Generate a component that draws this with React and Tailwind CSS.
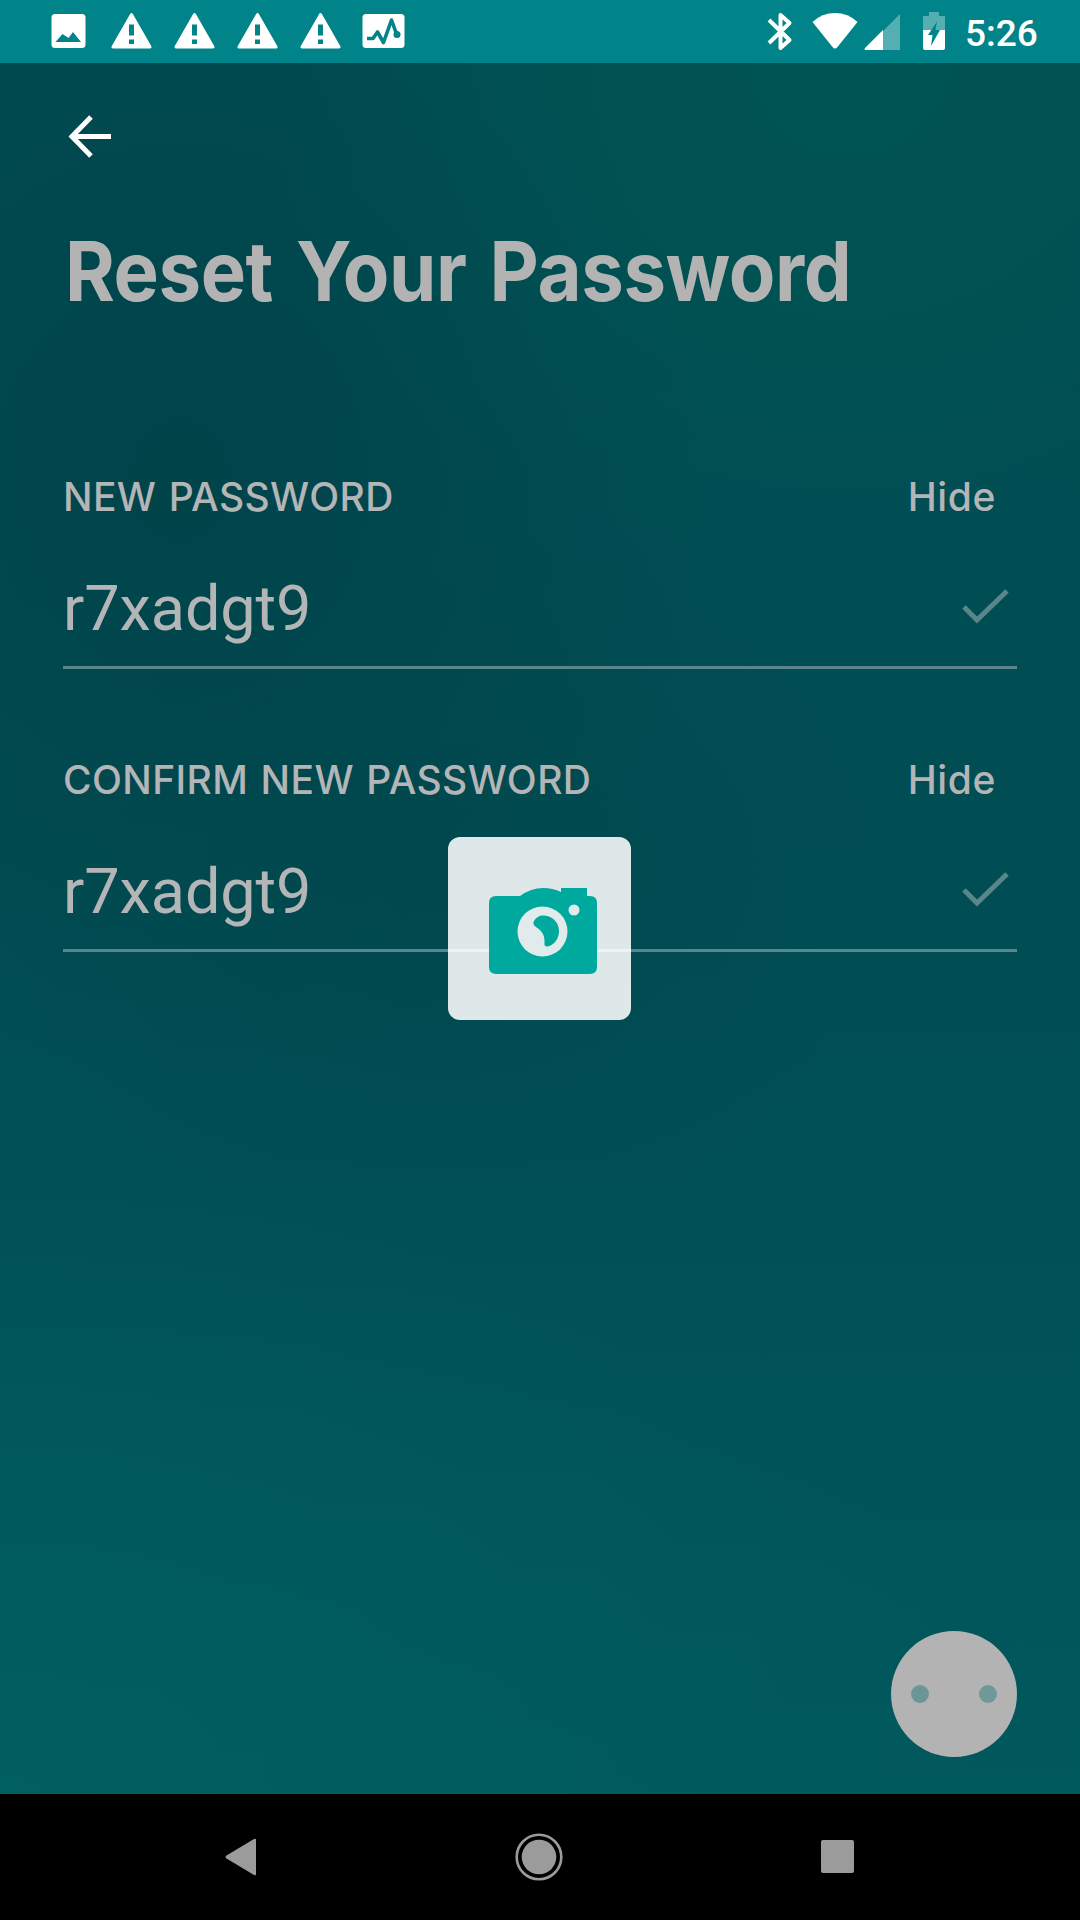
const sans = "font-['Inter','Liberation_Sans',sans-serif]";

function Warning() {
  return (
    <svg className="h-[36px] w-[41px]" viewBox="0 0 41 36" fill="#fff" fillRule="evenodd">
      <path d="M20.500 0Q21.300 0 22 1.200L40.500 33.500Q41 35.500 39 35.500H2Q0 35.500.5 33.500L19 1.200Q19.700 0 20.500 0ZM18 11.500V22.500H23V11.500ZM18 26.500V31H23V26.500Z" />
    </svg>
  );
}

function StatusBar() {
  return (
    <header className="flex h-[63px] shrink-0 items-start bg-[#008489] text-white">
      <div className="flex pt-[13px] pl-[51px]">
        <svg className="h-[36px] w-[35px]" viewBox="0 0 35 36" fill="#fff" fillRule="evenodd">
          <path d="M4 1H31Q34.500 1 34.500 4.500V31.500Q34.500 35 31 35H4Q.5 35 .5 31.500V4.500Q.5 1 4 1ZM4.500 29H30L22 19L17.500 25L11.500 21Z" />
        </svg>
        <div className="flex gap-[22px] pl-[25px]">
          <Warning /><Warning /><Warning /><Warning />
        </div>
        <svg className="ml-[21px] h-[36px] w-[43px]" viewBox="0 0 43 36">
          <rect x=".5" y="1" width="42" height="34" rx="3.500" fill="#fff" />
          <path d="M5 25.500H11L15.500 19L21.500 29.500L29.500 7L34.500 21" fill="none" stroke="#008489" strokeWidth="3.600" strokeLinejoin="round" />
          <circle cx="35" cy="21.500" r="3.500" fill="#008489" />
        </svg>
      </div>
      <div className="ml-auto flex pt-[12px] pr-[44px]">
        <svg className="h-[39px] w-[26px]" viewBox="0 0 26 39">
          <path d="M2 8L22.500 28L13.500 36V3L22.500 11L2 31" fill="none" stroke="#fff" strokeWidth="4" strokeLinejoin="round" />
        </svg>
        <svg className="ml-[19px] h-[39px] w-[46px]" viewBox="0 0 46 39" fill="#fff">
          <path d="M.5 10Q10 1 23 1T45.500 10L25.500 35Q23 38 20.500 35Z" />
        </svg>
        <svg className="ml-[6px] h-[39px] w-[37px]" viewBox="0 0 37 39">
          <path d="M19 19L36 2V38H19Z" fill="#55afb2" />
          <path d="M19 18V38H2Q-.5 38 1 36Z" fill="#fff" />
        </svg>
        <svg className="ml-[21px] h-[39px] w-[24px]" viewBox="0 0 24 39">
          <path d="M7 0H17V4H23V18H1V4H7Z" fill="#55afb2" />
          <path d="M1 18H23V36Q23 38 21 38H3Q1 38 1 36Z" fill="#fff" />
          <path d="M15 9.500L13.500 18H18L9 34L10.500 23H6Z" fill="#008489" />
        </svg>
        <span className="-mt-[1px] ml-[19px] w-[71px] font-['Roboto',sans-serif] text-[37px] leading-[46px] font-medium whitespace-nowrap">5:26</span>
      </div>
    </header>
  );
}

function PasswordField({ label }) {
  return (
    <section className="h-[283px] px-[63px] text-[#b4b5b6]">
      <div className={`flex h-[48px] items-center justify-between pr-[21px] text-[39px] leading-[48px] font-[450] ${sans}`}>
        <span className="tracking-[0.400px] whitespace-nowrap [word-spacing:1.500px]">{label}</span>
        <span className="tracking-[0.600px]">Hide</span>
      </div>
      <div className="mt-[41px] flex h-[107px] items-start justify-between border-b-[3px] border-[#5a858a] pr-[8px]">
        <span className="pt-[10px] font-['Roboto',sans-serif] text-[63px] leading-[74px] tracking-[-0.100px]">r7xadgt9</span>
        <svg className="mt-[26px] h-[38px] w-[48px]" viewBox="0 0 48 38">
          <path d="M3 19L16 32L46 3" fill="none" stroke="#59868b" strokeWidth="5" />
        </svg>
      </div>
    </section>
  );
}

function CameraLoader() {
  return (
    <div className="absolute top-[837px] left-[448px] h-[183px] w-[183px] rounded-[12px] bg-[#dfe8e8]">
      <div className="absolute top-[112px] left-0 h-[3px] w-full bg-[#edf2f2]" />
      <svg className="absolute top-[51px] left-[41px] h-[86px] w-[108px]" viewBox="0 0 108 86">
        <path d="M7 8H31Q42 0 54 0Q64 0 72 4V0H98V8H101Q108 8 108 15V79Q108 86 101 86H7Q0 86 0 79V15Q0 8 7 8Z" fill="#00a99d" />
        <circle cx="53.500" cy="43.500" r="25" fill="#e2ebeb" />
        <circle cx="85" cy="22" r="5.500" fill="#e2ebeb" />
        <path d="M45 33C47 29 51 27 55 27.500C64 28 70 35 70 43C70 51 65 57 59 58.500Q55 59 55.500 55C56 47 53 43 47 39Q43 36 45 33Z" fill="#00a99d" />
      </svg>
    </div>
  );
}

function NavBar() {
  return (
    <nav className="flex h-[126px] shrink-0 items-center bg-black pb-[1px] pl-[225px]">
      <svg className="h-[38px] w-[32px]" viewBox="0 0 32 38" fill="#9b9b9b">
        <path d="M1.500 17.500L29 1Q31 0 31 2V36Q31 38 29 37L1.500 20.500Q-.5 19 1.500 17.500Z" />
      </svg>
      <svg className="ml-[258px] h-[48px] w-[48px]" viewBox="0 0 48 48">
        <circle cx="24" cy="24" r="22.300" fill="none" stroke="#9b9b9b" strokeWidth="2.600" />
        <circle cx="24" cy="24" r="17.300" fill="#9b9b9b" />
      </svg>
      <div className="ml-[258px] h-[33px] w-[33px] rounded-[2px] bg-[#9b9b9b]" />
    </nav>
  );
}

export default function App() {
  return (
    <div className="relative flex h-[1920px] w-[1080px] flex-col overflow-hidden bg-black">
      <StatusBar />
      <main className="flex-1 bg-[radial-gradient(ellipse_600px_550px_at_850px_0px,#005553_0%,#00555300_100%),radial-gradient(ellipse_520px_600px_at_180px_420px,#00444a_0%,#00444a00_100%),radial-gradient(ellipse_450px_350px_at_440px_820px,#00494f_0%,#00494f00_100%),radial-gradient(ellipse_1000px_600px_at_0px_1730px,#005f60_0%,#005f6000_100%),linear-gradient(180deg,#004c52_0%,#004e54_50%,#005056_65%,#00595d_100%)]">
        <button className="mt-[50px] ml-[67px] block h-[46px] w-[46px]" aria-label="Back">
          <svg viewBox="0 0 46 46" className="h-[46px] w-[46px]">
            <path d="M24 4L5 23.500L24 43M5 23.500H44" fill="none" stroke="#fff" strokeWidth="5" />
          </svg>
        </button>
        <h1 className={`mt-[62px] ml-[65px] origin-left scale-x-[0.917] text-[83px] leading-[100px] font-bold tracking-[-0.500px] whitespace-nowrap text-[#b3b3b3] [word-spacing:6px] ${sans}`}>Reset Your Password</h1>
        <div className="mt-[152px]">
          <PasswordField label="NEW PASSWORD" />
          <PasswordField label="CONFIRM NEW PASSWORD" />
        </div>
        <button className="mt-[592px] ml-[891px] flex h-[126px] w-[126px] items-center justify-center gap-[50px] rounded-full bg-[#b3b3b3]" aria-label="Next">
          <span className="h-[18px] w-[18px] rounded-full bg-[#6b9696]" />
          <span className="h-[18px] w-[18px] rounded-full bg-[#6f9999]" />
        </button>
      </main>
      <NavBar />
      <CameraLoader />
    </div>
  );
}
